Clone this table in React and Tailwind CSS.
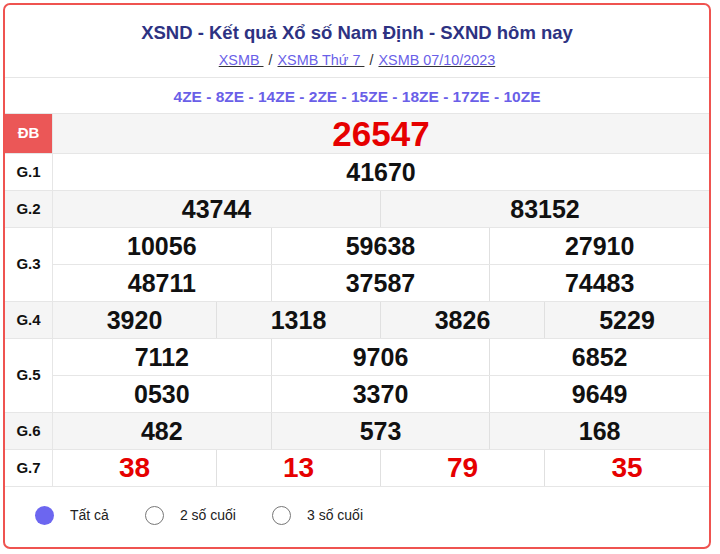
const font = { fontFamily: '"Liberation Sans", Arial, sans-serif' }

const rows = [
  { label: 'G.1', cols: 1, nums: [['41670']] },
  { label: 'G.2', cols: 2, nums: [['43744', '83152']] },
  { label: 'G.3', cols: 3, nums: [['10056', '59638', '27910'], ['48711', '37587', '74483']] },
  { label: 'G.4', cols: 4, nums: [['3920', '1318', '3826', '5229']] },
  { label: 'G.5', cols: 3, nums: [['7112', '9706', '6852'], ['0530', '3370', '9649']] },
  { label: 'G.6', cols: 3, nums: [['482', '573', '168']] },
  { label: 'G.7', cols: 4, nums: [['38', '13', '79', '35']], red: true },
]

const gridCols = {
  1: 'grid-cols-1',
  2: 'grid-cols-2',
  3: 'grid-cols-3',
  4: 'grid-cols-4',
}

function PrizeRow({ row, index }) {
  const gray = index % 2 === 1
  return (
    <div className={`flex border-b border-[#e6e6e6] ${gray ? 'bg-[#f5f5f5]' : 'bg-white'}`}>
      <div className="w-[48px] shrink-0 border-r border-[#e6e6e6] flex items-center justify-center text-[15px] font-bold text-[#111]">
        {row.label}
      </div>
      <div className="flex-1 flex flex-col">
        {row.nums.map((line, i) => (
          <div
            key={i}
            className={`grid ${gridCols[row.cols]} ${i < row.nums.length - 1 ? 'border-b border-[#e6e6e6]' : ''}`}
          >
            {line.map((n, j) => (
              <div
                key={j}
                className={`h-[36px] leading-none flex items-center justify-center font-bold ${
                  row.red ? 'text-[28px] text-[#e60000]' : 'text-[25px] text-[#111]'
                } ${j < line.length - 1 ? 'border-r border-[#e0e0e0]' : ''}`}
              >
                {n}
              </div>
            ))}
          </div>
        ))}
      </div>
    </div>
  )
}

function Radio({ checked, label }) {
  return (
    <div className="flex items-center gap-[16px]">
      {checked ? (
        <span className="w-[19px] h-[19px] rounded-full bg-[#6c66f0]" />
      ) : (
        <span className="w-[19px] h-[19px] rounded-full border border-[#777] bg-white" />
      )}
      <span className="text-[14px] text-[#222]">{label}</span>
    </div>
  )
}

export default function App() {
  return (
    <div className="w-[720px] h-[554px] bg-white pt-[3px] pl-[3px]" style={font}>
      <div className="w-[708px] h-[546px] border-2 border-[#ef5350] rounded-[7px] overflow-hidden flex flex-col">
        <div className="pt-[17px] pb-[7px] border-b border-[#e6e6e6] text-center">
          <h1 className="text-[18.5px] leading-[22px] font-bold text-[#2d3282]">
            XSND - Kết quả Xổ số Nam Định - SXND hôm nay
          </h1>
          <div className="mt-[6px] leading-[20px] text-[14.4px] text-[#333]">
            <a href="#" className="text-[#6a5fe8] underline decoration-[#333]">XSMB </a>
            <span className="mx-[5px]">/</span>
            <a href="#" className="text-[#6a5fe8] underline decoration-[#333]">XSMB Thứ 7 </a>
            <span className="mx-[5px]">/</span>
            <a href="#" className="text-[#6a5fe8] underline decoration-[#333]">XSMB 07/10/2023</a>
          </div>
        </div>

        <div className="h-[36px] pt-[3px] border-b border-[#e6e6e6] flex items-center justify-center text-[15.5px] font-bold text-[#6a5fe8]">
          4ZE - 8ZE - 14ZE - 2ZE - 15ZE - 18ZE - 17ZE - 10ZE
        </div>

        <div className="flex h-[40px] border-b border-[#e6e6e6] bg-[#f5f5f5]">
          <div className="w-[48px] shrink-0 bg-[#eb5757] border-r border-[#e6e6e6] flex items-center justify-center text-[15px] font-bold text-white">
            ĐB
          </div>
          <div className="flex-1 flex items-center justify-center leading-none text-[35px] font-bold text-[#e60000]">
            26547
          </div>
        </div>

        {rows.map((row, i) => (
          <PrizeRow key={row.label} row={row} index={i} />
        ))}

        <div className="flex-1 flex items-center pl-[30px] gap-[36px] pb-[4px]">
          <Radio checked label="Tất cả" />
          <Radio label="2 số cuối" />
          <Radio label="3 số cuối" />
        </div>
      </div>
    </div>
  )
}
